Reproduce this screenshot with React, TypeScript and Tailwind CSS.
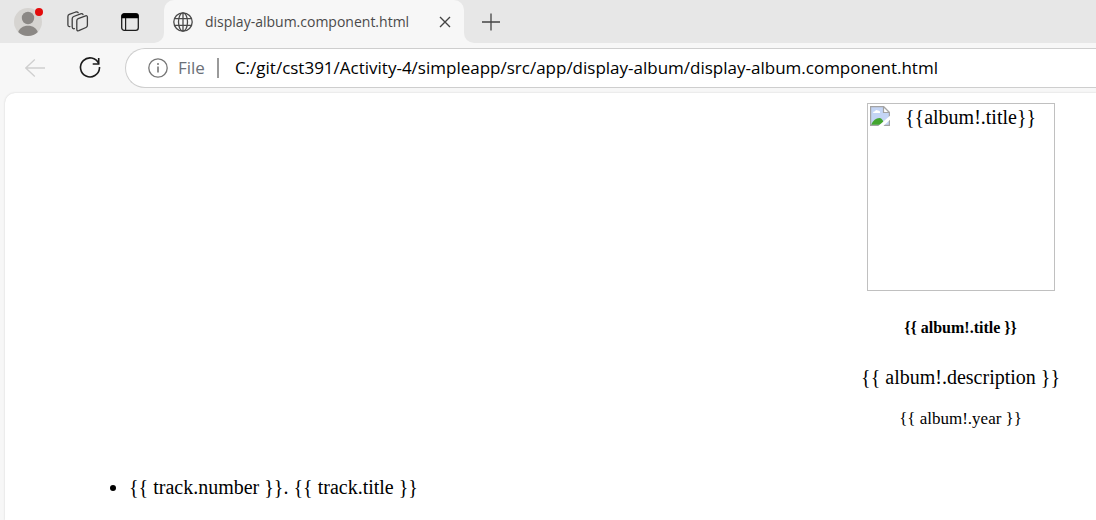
function ProfileIcon() {
  return (
    <svg className="block size-8" viewBox="0 0 32 32" aria-hidden="true">
      <defs>
        <clipPath id="avatar">
          <circle cx="16" cy="16" r="14" />
        </clipPath>
      </defs>
      <circle cx="16" cy="16" r="14" fill="#d6d4d1" />
      <g fill="#8b8885" clipPath="url(#avatar)">
        <circle cx="16" cy="12" r="6.2" />
        <path d="M5.5 28C7 22 11 19.7 16 19.7S25 22 26.5 28L22 31H10Z" />
      </g>
      <circle cx="27" cy="6" r="4" fill="#e30b0b" />
    </svg>
  );
}

function WorkspacesIcon() {
  return (
    <svg className="block size-6" viewBox="0 0 24 24" fill="none" stroke="#3f3f3f" strokeWidth="1.3" strokeLinejoin="round" strokeLinecap="round" aria-hidden="true">
      <path d="M12.2 8.6 19.6 5.8Q21.4 5.3 21.4 7.2V15.2Q21.4 16.9 20 17.5L12.8 20.7Q10.8 21.3 10.8 19.3V10.7Q10.8 9.1 12.2 8.6Z" />
      <path d="M8.4 18.7 7.8 18.8Q6.2 18.8 6.2 17V8.8Q6.2 7.1 7.7 6.5L14.6 3.8Q16.4 3.2 17 4.6" />
      <path d="M3.9 16.6 3.4 16.6Q1.9 16.5 1.9 15V6.6Q1.9 5 3.3 4.4L9.8 2Q11.6 1.5 12.2 2.7" />
    </svg>
  );
}

function VerticalTabsIcon() {
  return (
    <svg className="block size-5" viewBox="0 0 20 20" fill="none" aria-hidden="true">
      <rect x="1.7" y="1.7" width="16.6" height="16.6" rx="2.6" stroke="#1d1d1d" strokeWidth="1.3" />
      <path d="M1.5 6.2V4Q1.5 1.5 4 1.5H16Q18.5 1.5 18.5 4V6.2Z" fill="#000" />
      <path d="M5.6 6V18" stroke="#1d1d1d" strokeWidth="1.2" />
    </svg>
  );
}

function GlobeIcon() {
  return (
    <svg className="block size-5 shrink-0" viewBox="0 0 20 20" fill="none" stroke="#4a4a4a" strokeWidth="1.3" aria-hidden="true">
      <circle cx="10" cy="10" r="9.2" />
      <ellipse cx="10" cy="10" rx="4.5" ry="9.2" />
      <path d="M1.6 6.6H18.4M1.6 13.4H18.4M10 1V19" />
    </svg>
  );
}

function BackIcon() {
  return (
    <svg className="block size-5" viewBox="0 0 20 20" fill="none" stroke="#cfcfcf" strokeWidth="1.3" aria-hidden="true">
      <path d="M20 10H.8M9.8 1.5.8 10 9.8 18.5" />
    </svg>
  );
}

function ReloadIcon() {
  return (
    <svg className="block size-6" viewBox="0 0 24 24" fill="none" stroke="#1b1b1b" strokeWidth="1.6" aria-hidden="true">
      <path d="M20.7 7.5A9.5 9.5 0 1 0 21.5 12V11" />
      <path d="M20.7 2V8H14.7" />
    </svg>
  );
}

function BrokenImageIcon() {
  return (
    <svg className="block size-5 shrink-0" viewBox="0 0 20 20" aria-hidden="true">
      <path d="M.6.6H13.5L19.4 6.5V19.4H.6Z" fill="#c4d5f5" stroke="#a3a3a3" strokeWidth="1.2" />
      <path d="M3 7Q3 5.2 5 5.2Q6 3.3 8 4.5Q10.5 4.8 10 7Z" fill="#fff" />
      <path d="M1.2 18.8Q4 12 9.5 12Q13 12.5 14.5 18.8Z" fill="#43a52f" />
      <path d="M13.5.6V6.5H19.4Z" fill="#fff" stroke="#a3a3a3" strokeWidth="1.2" />
      <path d="M8 20.2 20.2 9.5V13.5L13.2 20.2Z" fill="#fff" />
    </svg>
  );
}

function TabStrip() {
  return (
    <div className="flex h-[43px] bg-[#f7f7f7]">
      <div className="flex w-41 shrink-0 items-center rounded-br-[10px] bg-[#e7e7e7]">
        <button type="button" aria-label="Profile" className="ml-3">
          <ProfileIcon />
        </button>
        <button type="button" aria-label="Workspaces" className="ml-[22px]">
          <WorkspacesIcon />
        </button>
        <button type="button" aria-label="Tab actions menu" className="ml-[30px]">
          <VerticalTabsIcon />
        </button>
      </div>
      <div className="flex w-75 shrink-0 bg-[#e7e7e7] bg-[linear-gradient(#e7e7e7_50%,#f7f7f7_50%)]">
        <div className="flex flex-1 items-center rounded-t-[10px] bg-[#f7f7f7] px-[9px] text-[#4a4a4a]">
          <GlobeIcon />
          <span className="ml-3 flex-1 text-[14px] leading-5 whitespace-nowrap">display-album.component.html</span>
          <button type="button" aria-label="Close tab" className="mr-1">
            <svg className="block size-3" viewBox="0 0 12 12" fill="none" stroke="#444" strokeWidth="1.4" aria-hidden="true">
              <path d="M1 1 11 11M11 1 1 11" />
            </svg>
          </button>
        </div>
      </div>
      <div className="flex flex-1 items-center rounded-bl-[10px] bg-[#e7e7e7]">
        <button type="button" aria-label="New tab" className="ml-[17px]">
          <svg className="block size-5" viewBox="0 0 20 20" fill="none" stroke="#444" strokeWidth="1.3" aria-hidden="true">
            <path d="M10 1.5V18.5M1 10H19" />
          </svg>
        </button>
      </div>
    </div>
  );
}

function Toolbar() {
  return (
    <div className="flex h-[50px] items-center pl-[25px]">
      <button type="button" aria-label="Back" disabled>
        <BackIcon />
      </button>
      <button type="button" aria-label="Reload" className="ml-[33px]">
        <ReloadIcon />
      </button>
      <div className="ml-[23px] flex h-10 flex-1 items-center rounded-l-full border border-r-0 border-[#cecece] bg-white pl-[22px]">
        <svg className="block size-5 shrink-0" viewBox="0 0 20 20" fill="none" stroke="#767676" strokeWidth="1.3" aria-hidden="true">
          <circle cx="10" cy="10" r="9.2" />
          <path d="M10 8.5V14.5" strokeWidth="1.6" />
          <circle cx="10" cy="6" r="1" fill="#767676" stroke="none" />
        </svg>
        <label htmlFor="address" className="ml-[10px] text-[17px] leading-6 text-[#6b7078]">
          File
        </label>
        <span className="ml-3 h-5 w-[2px] bg-[#9a9a9a]" />
        <input
          id="address"
          type="text"
          defaultValue="C:/git/cst391/Activity-4/simpleapp/src/app/display-album/display-album.component.html"
          className="ml-4 h-6 min-w-0 flex-1 bg-transparent text-[17px] leading-6 text-black outline-none"
        />
      </div>
    </div>
  );
}

export default function App() {
  return (
    <div className="flex min-h-screen flex-col bg-[#f7f7f7] font-['Open_Sans','Noto_Sans',sans-serif]">
      <header>
        <TabStrip />
        <Toolbar />
      </header>
      <main className="ml-[5px] flex-1 rounded-tl-[10px] bg-white pt-[10px] pb-5 font-['Liberation_Serif',serif] text-[20px] leading-[22px] text-black shadow-[0_0_2px_#cccccc]">
        <div className="flex justify-end pr-9">
          <article className="flex flex-col items-center">
            <div role="img" aria-label="{{album!.title}}" className="flex size-47 items-start border border-[#c0c0c0] p-[2px]">
              <BrokenImageIcon />
              <span className="flex-1 text-center">{"{{album!.title}}"}</span>
            </div>
            <h5 className="mt-[27px] text-[16px] leading-5 font-bold">{"{{ album!.title }}"}</h5>
            <p className="mt-7">{"{{ album!.description }}"}</p>
            <p className="mt-[21px] text-[17px] leading-5">{"{{ album!.year }}"}</p>
          </article>
        </div>
        <ul className="mt-[47px] list-disc pl-[124px]">
          <li>{"{{ track.number }}. {{ track.title }}"}</li>
        </ul>
      </main>
    </div>
  );
}
